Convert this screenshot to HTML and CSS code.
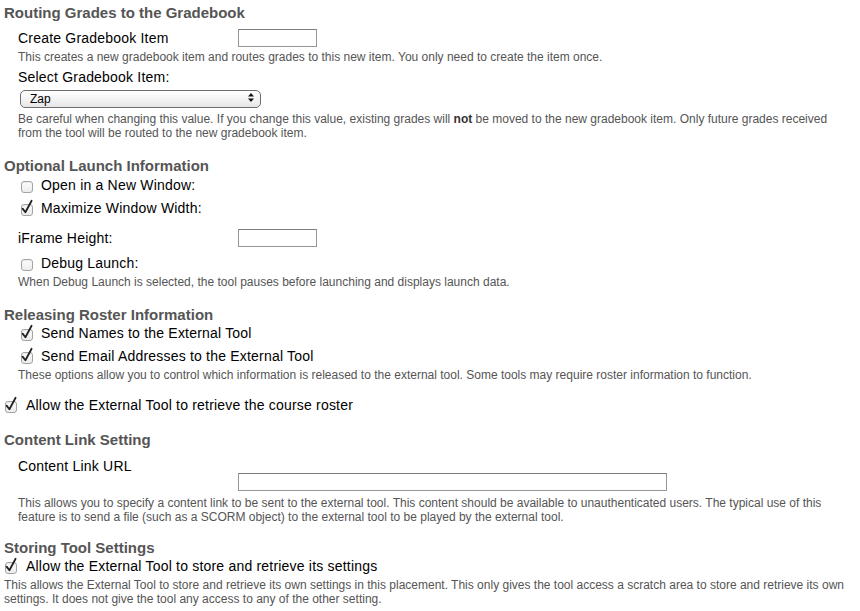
FILE: index.html
```html
<!DOCTYPE html>
<html>
<head>
<meta charset="utf-8">
<title>External Tool Settings</title>
<link rel="stylesheet" href="styles.css">
</head>
<body>
<div class="page">

  <h2 class="sh">Routing Grades to the Gradebook</h2>
  <div class="frow m7 ind">
    <label class="flabel">Create Gradebook Item</label>
    <input class="txt short" type="text">
  </div>
  <p class="help ind p3">This creates a new gradebook item and routes grades to this new item. You only need to create the item once.</p>
  <div class="line ind m5">Select Gradebook Item:</div>
  <div class="selwrap m3">
    <select class="sel"><option>Zap</option></select>
    <svg class="arrows" width="6" height="9" viewBox="0 0 6 9"><path d="M3 0 L6 3.4 L0 3.4 Z M0 5.6 L6 5.6 L3 9 Z" fill="#111"/></svg>
  </div>
  <p class="help ind p5">Be careful when changing this value. If you change this value, existing grades will <b>not</b> be moved to the new gradebook item. Only future grades received<br>from the tool will be routed to the new gradebook item.</p>

  <h2 class="sh m17">Optional Launch Information</h2>
  <div class="cbrow cbind m2">
    <span class="cb"></span><span class="line">Open in a New Window:</span>
  </div>
  <div class="cbrow cbind m6">
    <span class="cb on"><svg class="tick" width="14" height="17" viewBox="0 0 14 17"><path d="M2.6 9.6 L5.4 13.2 L11.6 1.8" fill="none" stroke="#222" stroke-width="1.8" stroke-linejoin="round" stroke-linecap="round"/></svg></span><span class="line">Maximize Window Width:</span>
  </div>
  <div class="frow m12 ind">
    <label class="flabel">iFrame Height:</label>
    <input class="txt short" type="text">
  </div>
  <div class="cbrow cbind m8">
    <span class="cb"></span><span class="line">Debug Launch:</span>
  </div>
  <p class="help ind p3">When Debug Launch is selected, the tool pauses before launching and displays launch data.</p>

  <h2 class="sh m17">Releasing Roster Information</h2>
  <div class="cbrow cbind m1">
    <span class="cb on"><svg class="tick" width="14" height="17" viewBox="0 0 14 17"><path d="M2.6 9.6 L5.4 13.2 L11.6 1.8" fill="none" stroke="#222" stroke-width="1.8" stroke-linejoin="round" stroke-linecap="round"/></svg></span><span class="line">Send Names to the External Tool</span>
  </div>
  <div class="cbrow cbind m6">
    <span class="cb on"><svg class="tick" width="14" height="17" viewBox="0 0 14 17"><path d="M2.6 9.6 L5.4 13.2 L11.6 1.8" fill="none" stroke="#222" stroke-width="1.8" stroke-linejoin="round" stroke-linecap="round"/></svg></span><span class="line">Send Email Addresses to the External Tool</span>
  </div>
  <p class="help ind m1 p2">These options allow you to control which information is released to the external tool. Some tools may require roster information to function.</p>
  <div class="cbrow cbout m15">
    <span class="cb on"><svg class="tick" width="14" height="17" viewBox="0 0 14 17"><path d="M2.6 9.6 L5.4 13.2 L11.6 1.8" fill="none" stroke="#222" stroke-width="1.8" stroke-linejoin="round" stroke-linecap="round"/></svg></span><span class="line">Allow the External Tool to retrieve the course roster</span>
  </div>

  <h2 class="sh m17">Content Link Setting</h2>
  <div class="frow top m9 ind">
    <label class="flabel">Content Link URL</label>
    <input class="txt long" type="text">
  </div>
  <p class="help ind m5">This allows you to specify a content link to be sent to the external tool. This content should be available to unauthenticated users. The typical use of this<br>feature is to send a file (such as a SCORM object) to the external tool to be played by the external tool.</p>

  <h2 class="sh m15">Storing Tool Settings</h2>
  <div class="cbrow cbout m1">
    <span class="cb on"><svg class="tick" width="14" height="17" viewBox="0 0 14 17"><path d="M2.6 9.6 L5.4 13.2 L11.6 1.8" fill="none" stroke="#222" stroke-width="1.8" stroke-linejoin="round" stroke-linecap="round"/></svg></span><span class="line">Allow the External Tool to store and retrieve its settings</span>
  </div>
  <p class="help m3">This allows the External Tool to store and retrieve its own settings in this placement. This only gives the tool access a scratch area to store and retrieve its own<br>settings. It does not give the tool any access to any of the other setting.</p>

</div>
</body>
</html>
```
FILE: styles.css
```css
* { box-sizing: border-box; }
html, body { margin: 0; padding: 0; background: #fff; }
body {
  font-family: "Liberation Sans", Arial, Helvetica, sans-serif;
  color: #000;
}
.page { padding: 4px 0 0 4px; width: 860px; }

.sh {
  margin: 0;
  font-size: 15px;
  line-height: 18px;
  font-weight: bold;
  color: #555;
}
.line { font-size: 14px; line-height: 17px; color: #000; letter-spacing: 0.2px; }
.help {
  margin: 0;
  font-size: 12px;
  line-height: 14px;
  color: #555;
  white-space: nowrap;
}
.help b { color: #333; }
.ind { margin-left: 14px; }

.m1 { margin-top: 1px; }
.m2 { margin-top: 2px; }
.m3 { margin-top: 3px; }
.m5 { margin-top: 5px; }
.m6 { margin-top: 6px; }
.m7 { margin-top: 7px; }
.m8 { margin-top: 8px; }
.m9 { margin-top: 9px; }
.m12 { margin-top: 12px; }
.m15 { margin-top: 15px; }
.m17 { margin-top: 17px; }
.p2 { padding-top: 2px; }
.p3 { padding-top: 3px; }
.p5 { padding-top: 5px; }

/* label + text field rows */
.frow { display: flex; align-items: flex-end; }
.frow.top { align-items: flex-start; }
.flabel { width: 220px; font-size: 14px; line-height: 17px; letter-spacing: 0.2px; }
.frow.top .txt { margin-top: 15px; }
.txt {
  height: 18px;
  border: 1px solid #969696;
  border-top-color: #7c7c7c;
  background: #fff;
  padding: 0 3px;
  font: 12px "Liberation Sans", Arial, sans-serif;
  outline: none;
}
.short { width: 79px; }
.long { width: 429px; }

/* select */
.selwrap { position: relative; width: 241px; height: 18px; margin-left: 16px; }
.sel {
  -webkit-appearance: none;
  appearance: none;
  width: 241px;
  height: 18px;
  border: 1px solid #6e6e6e;
  border-radius: 5px;
  background: linear-gradient(#ffffff, #f4f4f4 50%, #e6e6e6);
  font: 12px/16px "Liberation Sans", Arial, sans-serif;
  color: #000;
  padding: 0 0 0 9px;
  margin: 0;
  outline: none;
  box-shadow: inset 0 1px 0 #fff;
}
.arrows { position: absolute; right: 7px; top: 4px; }

/* checkboxes */
.cbrow { display: flex; align-items: flex-start; }
.cbind { margin-left: 17px; }
.cbout { margin-left: 1px; }
.cb {
  position: relative;
  flex: none;
  width: 12px;
  height: 12px;
  margin-top: 4px;
  margin-right: 8px;
  border: 1px solid #a4a4a4;
  border-radius: 3px;
  background: linear-gradient(#fdfdfd, #ececec);
  box-shadow: inset 0 1px 1px rgba(0,0,0,0.08);
}
.cbout .cb { margin-right: 9px; }
.tick { position: absolute; left: -2px; top: -6px; overflow: visible; }
```
